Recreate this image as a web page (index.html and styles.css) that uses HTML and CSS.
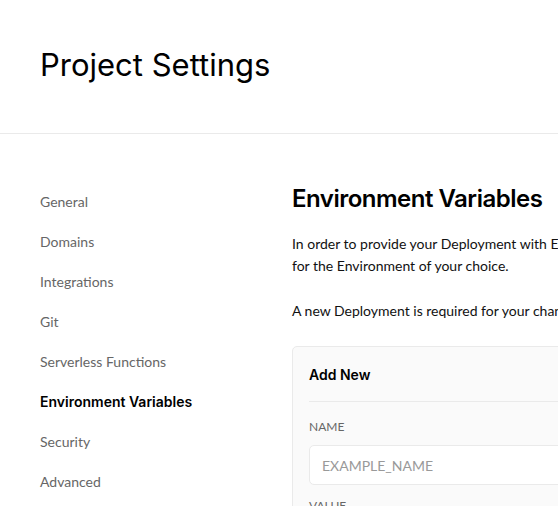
FILE: index.html
```html
<!DOCTYPE html>
<html>
<head>
<meta charset="utf-8">
<link rel="stylesheet" href="styles.css">
</head>
<body>
<header class="page-header">
  <h1 class="page-title">Project Settings</h1>
</header>
<div class="layout">
  <nav class="sidebar">
    <a class="nav-item">General</a>
    <a class="nav-item">Domains</a>
    <a class="nav-item">Integrations</a>
    <a class="nav-item">Git</a>
    <a class="nav-item">Serverless Functions</a>
    <a class="nav-item active">Environment Variables</a>
    <a class="nav-item">Security</a>
    <a class="nav-item">Advanced</a>
  </nav>
  <main class="content">
    <h2 class="section-title">Environment Variables</h2>
    <p class="desc">In order to provide your Deployment with Environment Variables at Build and Runtime, you may enter them right here,<br>for the Environment of your choice.</p>
    <p class="desc">A new Deployment is required for your changes to take effect.</p>
    <section class="card">
      <div class="card-header">Add New</div>
      <div class="card-body">
        <label class="field-label">NAME</label>
        <input class="field-input" type="text" placeholder="EXAMPLE_NAME">
        <label class="field-label">VALUE</label>
        <input class="field-input" type="text" placeholder="I9JU23NF394R6HH">
      </div>
    </section>
  </main>
</div>
</body>
</html>
```
FILE: styles.css
```css
html, body {
  margin: 0;
  padding: 0;
  overflow: hidden;
  background: #fff;
}
body {
  font-family: Lato, "Noto Sans", sans-serif;
  color: #111;
  width: 1100px;
}
.page-header {
  height: 133px;
  border-bottom: 1px solid #eaeaea;
  display: flex;
  align-items: center;
  padding: 0 40px;
}
.page-title {
  margin: 0;
  font-family: Inter, "Noto Sans", sans-serif;
  font-size: 31px;
  font-weight: 400;
  line-height: 40px;
  color: #000;
  padding-bottom: 3px;
}
.layout {
  display: flex;
  padding: 48px 40px 0;
}
.sidebar {
  width: 252px;
  flex: none;
  display: flex;
  flex-direction: column;
}
.nav-item {
  font-size: 14px;
  line-height: 20px;
  padding: 10px 0;
  color: #666;
}
.nav-item.active {
  font-family: Inter, "Noto Sans", sans-serif;
  color: #000;
  font-weight: 600;
}
.content {
  width: 760px;
  flex: none;
}
.section-title {
  margin: 1px 0 0;
  font-family: Inter, "Noto Sans", sans-serif;
  font-size: 24px;
  line-height: 32px;
  font-weight: 600;
  color: #000;
  letter-spacing: -0.5px;
}
.desc {
  margin: 18px 0 0;
  font-size: 14px;
  line-height: 22px;
  color: #111;
  white-space: nowrap;
}
.desc + .desc {
  margin-top: 23px;
}
.card {
  margin-top: 24px;
  background: #fafafa;
  border: 1px solid #eaeaea;
  border-radius: 5px;
}
.card-header {
  margin: 0 16px;
  padding: 17px 0 15px;
  font-family: Inter, "Noto Sans", sans-serif;
  font-size: 14px;
  line-height: 22px;
  font-weight: 600;
  color: #000;
  border-bottom: 1px solid #eaeaea;
}
.card-body {
  padding: 16px;
  display: flex;
  flex-direction: column;
}
.field-label {
  font-size: 12px;
  line-height: 18px;
  color: #666;
  margin-bottom: 9px;
}
.field-input {
  height: 40px;
  box-sizing: border-box;
  border: 1px solid #eaeaea;
  border-radius: 5px;
  background: #fff;
  padding: 0 12px;
  font-family: Lato, "Noto Sans", sans-serif;
  font-size: 14px;
  color: #111;
  margin-bottom: 12px;
  outline: none;
}
.field-input::placeholder {
  color: #999;
}
```
